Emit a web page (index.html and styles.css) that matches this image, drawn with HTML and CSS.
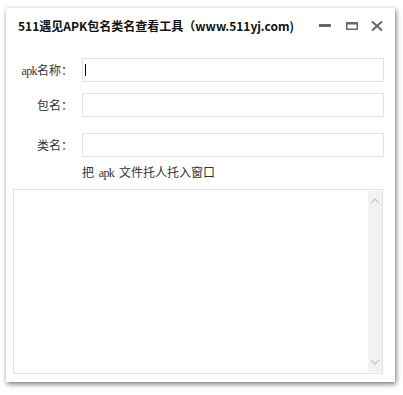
FILE: index.html
```html
<!DOCTYPE html>
<html lang="zh-CN">
<head>
<meta charset="utf-8">
<title>511遇见APK包名类名查看工具</title>
<link rel="stylesheet" href="styles.css">
</head>
<body>
<div class="window">
  <div class="titlebar">
    <div class="title">511遇见APK包名类名查看工具（www.511yj.com)</div>
    <div class="controls">
      <svg class="ctl c-min" width="12" height="12" viewBox="0 0 12 12"><rect x="0" y="4" width="12" height="3" fill="#666"/></svg>
      <svg class="ctl c-max" width="12" height="12" viewBox="0 0 12 12"><rect x="0.75" y="2.75" width="10.5" height="6.5" fill="none" stroke="#666" stroke-width="1.5"/><rect x="0" y="2" width="12" height="2.5" fill="#666"/></svg>
      <svg class="ctl c-close" width="12" height="12" viewBox="0 0 12 12"><path d="M1 1.5 L11 10.5 M11 1.5 L1 10.5" stroke="#666" stroke-width="2"/></svg>
    </div>
  </div>
  <div class="form">
    <div class="row r1">
      <label class="lbl"><span class="lat">apk</span>名称：</label>
      <div class="input"><span class="caret"></span></div>
    </div>
    <div class="row r2">
      <label class="lbl">包名：</label>
      <div class="input"></div>
    </div>
    <div class="row r3">
      <label class="lbl">类名：</label>
      <div class="input"></div>
    </div>
    <div class="hint">把 <span class="lat">apk</span> 文件托人托入窗口</div>
  </div>
  <div class="output">
    <div class="area"></div>
    <div class="scroll">
      <svg width="10" height="8" viewBox="0 0 10 8"><path d="M1 6 L5 2 L9 6" fill="none" stroke="#c8c8c8" stroke-width="1.3"/></svg>
      <svg width="10" height="8" viewBox="0 0 10 8"><path d="M1 2 L5 6 L9 2" fill="none" stroke="#c8c8c8" stroke-width="1.3"/></svg>
    </div>
  </div>
</div>
</body>
</html>
```
FILE: styles.css
```css
html, body {
  margin: 0;
  padding: 0;
  background: #ffffff;
}
body {
  width: 403px;
  height: 395px;
  overflow: hidden;
  font-family: "Noto Sans CJK SC", "Noto Sans", sans-serif;
  color: #333;
}
.window {
  margin: 8px 0 0 6px;
  width: 389px;
  height: 374px;
  background: #fff;
  box-shadow: 1px 2px 5px rgba(0, 0, 0, 0.55);
  display: flex;
  flex-direction: column;
  box-sizing: border-box;
}
.titlebar {
  height: 36px;
  display: flex;
  align-items: center;
  padding: 0 12px 0 12px;
}
.title {
  flex: 1;
  font-size: 12px;
  font-weight: bold;
  color: #111;
  letter-spacing: 0;
  white-space: nowrap;
  margin-top: -2px;
}
.controls {
  display: flex;
  align-items: center;
  margin-top: -1px;
}
.ctl {
  display: block;
}
.c-max { margin-left: 15px; }
.c-close { margin-left: 13px; }
.form {
  display: flex;
  flex-direction: column;
  padding: 14px 11px 0 0;
}
.row {
  display: grid;
  grid-template-columns: 67px 1fr;
  grid-template-rows: 24px;
  column-gap: 9px;
  align-items: center;
}
.r2 { margin-top: 11px; }
.r3 { margin-top: 16px; }
.lbl {
  text-align: right;
  font-size: 12px;
  color: #333;
  line-height: 24px;
  height: 24px;
  white-space: nowrap;
}
.lat {
  font-family: "Liberation Serif", serif;
  font-size: 12px;
  line-height: 1;
  letter-spacing: -0.6px;
}
.input {
  height: 24px;
  border: 1px solid #e2e2e2;
  box-sizing: border-box;
  background: #fff;
  position: relative;
}
.caret {
  position: absolute;
  left: 2px;
  top: 5px;
  width: 1px;
  height: 12px;
  background: #000;
}
.hint {
  margin: 6px 0 0 76px;
  font-size: 12px;
  line-height: 18px;
  height: 18px;
  color: #333;
  word-spacing: 2px;
}
.output {
  margin: 8px 12px 0 7px;
  height: 185px;
  border: 1px solid #e2e2e2;
  box-sizing: border-box;
  display: flex;
}
.area {
  flex: 1;
}
.scroll {
  width: 14px;
  margin: 1px 0 1px 0;
  background: #f2f2f2;
  display: flex;
  flex-direction: column;
  justify-content: space-between;
  align-items: center;
  padding: 6px 0;
}
.scroll svg { display: block; }
```
